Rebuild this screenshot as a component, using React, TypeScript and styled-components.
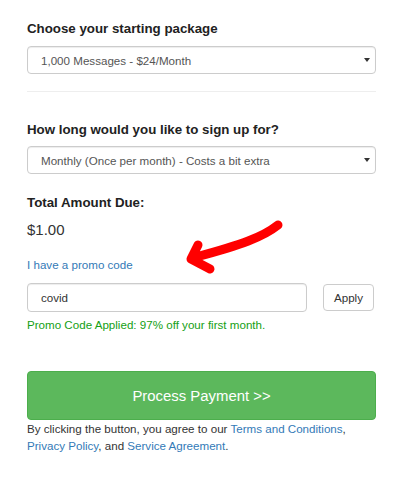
import React, { FC } from 'react';
import styled, { createGlobalStyle } from 'styled-components';

const GlobalStyle = createGlobalStyle`
  body {
    margin: 0;
    background: #fff;
    font-family: "Liberation Sans", Arial, sans-serif;
    color: #333;
  }
`;

const Page = styled.div`
  width: 349px;
  padding: 19px 0 0 27px;
`;

const Heading = styled.h4<{ $top?: number }>`
  margin: ${(p) => p.$top ?? 0}px 0 0;
  font-size: 13.3px;
  line-height: 20px;
  font-weight: bold;
  color: #222;
`;

const SelectWrap = styled.div<{ $top: number }>`
  position: relative;
  margin-top: ${(p) => p.$top}px;

  &::after {
    content: '';
    position: absolute;
    right: 6px;
    top: 12px;
    border-left: 3px solid transparent;
    border-right: 3px solid transparent;
    border-top: 4px solid #333;
    pointer-events: none;
  }
`;

const Select = styled.select`
  display: block;
  width: 100%;
  height: 28px;
  padding: 0 20px 0 13px;
  border: 1px solid #ccc;
  border-radius: 4px;
  background: #fff;
  appearance: none;
  font-family: inherit;
  font-size: 11.6px;
  color: #555;
  box-shadow: inset 0 1px 1px rgba(0, 0, 0, 0.075);
`;

const Rule = styled.hr`
  margin: 17px 0 0;
  border: 0;
  border-top: 1px solid #eee;
`;

const Amount = styled.div`
  margin-top: 5px;
  font-size: 15px;
  line-height: 24px;
  color: #333;
`;

const PromoArea = styled.div`
  position: relative;
`;

const PromoLink = styled.a`
  display: inline-block;
  margin-top: 14px;
  font-size: 11.6px;
  line-height: 18px;
  color: #337ab7;
  text-decoration: none;
`;

const PromoRow = styled.div`
  display: flex;
  align-items: center;
  gap: 16px;
  margin-top: 9px;
`;

const PromoInput = styled.input`
  box-sizing: border-box;
  width: 280px;
  height: 29px;
  padding: 0 13px;
  border: 1px solid #ccc;
  border-radius: 4px;
  font-family: inherit;
  font-size: 11.6px;
  color: #333;
  box-shadow: inset 0 1px 1px rgba(0, 0, 0, 0.075);
`;

const ApplyButton = styled.button`
  box-sizing: border-box;
  width: 51px;
  height: 27px;
  border: 1px solid #ccc;
  border-radius: 4px;
  background: #fff;
  font-family: inherit;
  font-size: 11.6px;
  color: #333;
  cursor: pointer;
`;

const Success = styled.div`
  margin-top: 4px;
  font-size: 11.6px;
  line-height: 18px;
  color: #14a014;
`;

const Arrow = styled.svg`
  position: absolute;
  left: 128px;
  top: -32px;
  overflow: visible;
`;

const PayButton = styled.button`
  display: block;
  width: 100%;
  height: 49px;
  margin-top: 37px;
  border: 1px solid #4cae4c;
  border-radius: 4px;
  background: #5cb85c;
  font-family: inherit;
  font-size: 14.9px;
  color: #fff;
  cursor: pointer;
`;

const Terms = styled.p`
  margin: 0;
  font-size: 11.6px;
  line-height: 17px;
  color: #333;
`;

const Link = styled.a`
  color: #337ab7;
  text-decoration: none;
`;

const App: FC = () => {
  return (
    <Page>
      <GlobalStyle />
      <Heading>Choose your starting package</Heading>
      <SelectWrap $top={7}>
        <Select defaultValue="1000">
          <option value="1000">1,000 Messages - $24/Month</option>
        </Select>
      </SelectWrap>
      <Rule />
      <Heading $top={28}>How long would you like to sign up for?</Heading>
      <SelectWrap $top={6}>
        <Select defaultValue="monthly">
          <option value="monthly">Monthly (Once per month) - Costs a bit extra</option>
        </Select>
      </SelectWrap>
      <Heading $top={19}>Total Amount Due:</Heading>
      <Amount>$1.00</Amount>
      <PromoArea>
        <PromoLink href="#">I have a promo code</PromoLink>
        <Arrow width="130" height="60" viewBox="0 0 130 60">
          <path
            d="M123 15 C108 27 86 35 41 47 M43 35 L36 49 L55 59"
            fill="none"
            stroke="#f00"
            strokeWidth="9"
            strokeLinecap="round"
            strokeLinejoin="round"
          />
        </Arrow>
        <PromoRow>
          <PromoInput defaultValue="covid" />
          <ApplyButton>Apply</ApplyButton>
        </PromoRow>
        <Success>Promo Code Applied: 97% off your first month.</Success>
      </PromoArea>
      <PayButton>Process Payment &gt;&gt;</PayButton>
      <Terms>
        By clicking the button, you agree to our <Link href="#">Terms and Conditions</Link>,{' '}
        <Link href="#">Privacy Policy</Link>, and <Link href="#">Service Agreement</Link>.
      </Terms>
    </Page>
  );
};

export default App;
